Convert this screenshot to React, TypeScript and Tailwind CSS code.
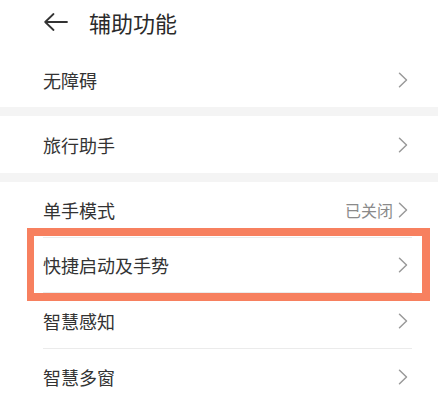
import React from "react";

const font = { fontFamily: '"Noto Sans CJK SC", "Noto Sans", sans-serif' };

function Chevron() {
  return (
    <svg width="10" height="16" viewBox="0 0 10 16" className="shrink-0">
      <path d="M1.5 1.2 L8.5 8 L1.5 14.8" fill="none" stroke="#9a9a9a" strokeWidth="1.5" strokeLinecap="round" strokeLinejoin="round" />
    </svg>
  );
}

function Row({ label, value, h }: { label: string; value?: string; h: string }) {
  return (
    <div className={`flex items-center justify-between pl-[43px] pr-[30px] ${h}`}>
      <span className="text-[18px] leading-none text-[#333333]">{label}</span>
      <div className="flex items-center gap-[5px]">
        {value && <span className="text-[16px] leading-none text-[#8a8a8a]">{value}</span>}
        <Chevron />
      </div>
    </div>
  );
}

function Divider() {
  return <div className="ml-[43px] mr-[26px] h-px bg-[#ebebeb]" />;
}

export default function App() {
  return (
    <div className="relative w-[438px] h-[400px] overflow-hidden bg-white" style={font}>
      <div className="flex items-center h-[52px] pb-[9px] pl-[44px]">
        <svg width="24" height="18" viewBox="0 0 24 18" className="shrink-0">
          <path d="M23 9 H1.5 M9.5 1 L1.2 9 L9.5 17" fill="none" stroke="#333333" strokeWidth="1.8" strokeLinecap="round" strokeLinejoin="round" />
        </svg>
        <span className="ml-[21px] text-[22px] leading-none text-[#2a2a2a]">辅助功能</span>
      </div>
      <Row label="无障碍" h="h-[55px]" />
      <div className="h-[9px] bg-[#f4f4f4]" />
      <Row label="旅行助手" h="h-[57px]" />
      <div className="h-[9px] bg-[#f4f4f4]" />
      <Row label="单手模式" value="已关闭" h="h-[55px]" />
      <Divider />
      <Row label="快捷启动及手势" h="h-[54px]" />
      <Divider />
      <Row label="智慧感知" h="h-[55px]" />
      <Divider />
      <Row label="智慧多窗" h="h-[55px]" />
      <div className="absolute left-[27px] top-[228px] w-[403px] h-[73px] border-[8px] border-l-[7px] border-[#f7805f]" />
    </div>
  );
}
